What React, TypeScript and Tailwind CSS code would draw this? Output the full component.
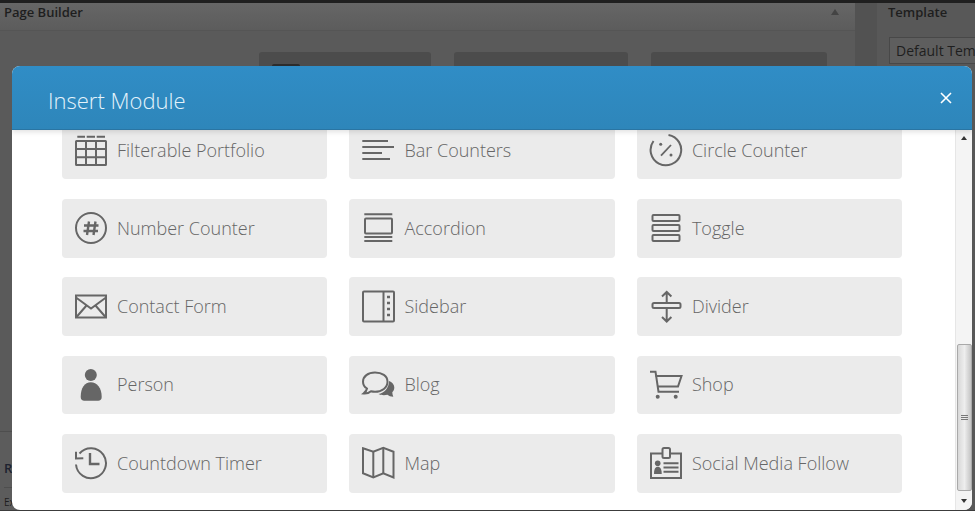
import type { ReactNode } from 'react';

const ic = { fill: 'none', stroke: '#666', strokeWidth: 2 };

function Icon({ children }: { children: ReactNode }) {
  return (
    <svg width="34" height="34" viewBox="0 0 34 34" className="shrink-0">
      {children}
    </svg>
  );
}

const icons: Record<string, ReactNode> = {
  portfolio: (
    <g {...ic}>
      <path d="M3.300 3.700H11M12.700 3.700H21M22.700 3.700H31" />
      <rect x="2" y="8" width="30" height="24" rx="0.500" />
      <path d="M2 16h30M2 24.300h30M12 8v24M22 8v24" />
    </g>
  ),
  bars: (
    <g {...ic}>
      <path d="M1.300 8H27M1.300 14H33M1.300 20H21M1.300 26H29" />
    </g>
  ),
  circle: (
    <g {...ic}>
      <path d="M19.500 1.900A15.300 15.300 0 1 1 4.500 8" />
      <path strokeWidth="1.800" d="M12 22.700 22 12" />
      <circle cx="11.700" cy="11.300" r="1.500" fill="#666" stroke="none" />
      <circle cx="22" cy="22" r="1.500" fill="#666" stroke="none" />
    </g>
  ),
  number: (
    <g {...ic}>
      <circle cx="17" cy="17" r="15" />
      <path strokeWidth="2.400" d="M15 10.500 13 24M21.500 10.500 19.500 24M10 14.500h14.500M9.500 20h14.500" />
    </g>
  ),
  accordion: (
    <g {...ic}>
      <path d="M3.300 3.300h28M3.300 26h28M3.300 30h28" />
      <rect x="4" y="7.500" width="27" height="15" rx="1" />
    </g>
  ),
  toggle: (
    <g {...ic}>
      <rect x="3.500" y="4" width="27" height="6" rx="1" />
      <rect x="3.500" y="14" width="27" height="6" rx="1" />
      <rect x="3.500" y="24" width="27" height="6" rx="1" />
    </g>
  ),
  contact: (
    <g {...ic}>
      <rect x="2" y="5.500" width="30" height="22" />
      <path d="m2 7.500 15 11 15-11M2.500 27l10-11.500M31.500 27l-10-11.500" />
    </g>
  ),
  sidebar: (
    <g {...ic}>
      <rect x="2" y="1.500" width="31" height="30" rx="1" />
      <path d="M22.500 1.500v30" />
      <path strokeWidth="2.500" d="M26 7h3M26 13h3M26 19h3M26 25h3" />
    </g>
  ),
  divider: (
    <g {...ic}>
      <rect x="3.500" y="13" width="28" height="5" rx="1.500" />
      <path d="M17.700 13V2M13 6.500 17.700 2l4.700 4.500M17.700 18v13.500M13 27l4.700 4.500 4.700-4.500" />
    </g>
  ),
  person: (
    <g fill="#666">
      <circle cx="16.800" cy="7" r="6" />
      <path d="M6.700 29c0-9 4-14.700 10.100-14.700S27.700 20 27.700 29c0 2.500-1.500 3.700-3.500 3.700H10.200c-2 0-3.500-1.200-3.500-3.700Z" />
    </g>
  ),
  blog: (
    <g>
      <path
        {...ic}
        d="M14 4.500C7 4.500 2 8.500 2 13.700c0 3 1.500 5.300 4 6.800-.3 2-1.500 3.500-3.500 5 3 .3 5.500-.5 7.500-2.200 1.500.4 2.800.5 4 .5 7 0 12.500-4.300 12.500-10.100S21 4.500 14 4.500Z"
      />
      <path
        fill="#666"
        d="M28 13c3 1 5.300 3.500 5.300 6.500 0 2-.8 3.500-2 4.800 0 1.500.4 3 1 4.500-2.500 0-4.500-.8-5.800-2-3 .6-6.500.6-9-.8 6-.7 10.500-6.500 10.500-13Z"
      />
    </g>
  ),
  shop: (
    <g {...ic}>
      <path d="M1 3.700h5.500l3 20h20.500" />
      <path d="M6.500 8h26l-3.500 10.500H8" />
      <circle cx="8.700" cy="28.700" r="2" fill="#666" stroke="none" />
      <circle cx="26.700" cy="28.700" r="2" fill="#666" stroke="none" />
    </g>
  ),
  timer: (
    <g {...ic}>
      <path d="M5.500 7.500A15 15 0 1 1 2 18.500" />
      <path d="M2 5.700 2 12.500l7.300-.3" />
      <path strokeWidth="2.400" d="M16 7v11h9.500" />
    </g>
  ),
  map: (
    <g {...ic}>
      <path d="M2 2.300 12.300 5.700 22.300 1.800 32.500 5.700V31.500L22.300 27.300 12.300 31.500 2 27.300Z" />
      <path d="M12.300 5.700v25.800M22.300 1.800v25.500" />
    </g>
  ),
  follow: (
    <g>
      <path {...ic} d="M13 7.500H2v24.500h30V7.500H21" />
      <rect {...ic} x="13.500" y="2" width="7.500" height="10" rx="1.500" />
      <circle cx="8.700" cy="17.300" r="2.800" fill="#666" />
      <path fill="#666" d="M5 28c0-5 1.300-7.300 3.800-7.300s3.900 2.300 3.900 7.300Z" />
      <path {...ic} d="M14.500 17.300h15M14.500 21.500h15M14.500 25.700h15" />
    </g>
  ),
};

const modules = [
  ['Filterable Portfolio', 'portfolio'],
  ['Bar Counters', 'bars'],
  ['Circle Counter', 'circle'],
  ['Number Counter', 'number'],
  ['Accordion', 'accordion'],
  ['Toggle', 'toggle'],
  ['Contact Form', 'contact'],
  ['Sidebar', 'sidebar'],
  ['Divider', 'divider'],
  ['Person', 'person'],
  ['Blog', 'blog'],
  ['Shop', 'shop'],
  ['Countdown Timer', 'timer'],
  ['Map', 'map'],
  ['Social Media Follow', 'follow'],
];

export default function App() {
  return (
    <div className="relative flex h-[511px] w-[975px] flex-col overflow-hidden bg-[#5a5a5a] font-['Open_Sans',sans-serif]">
      {/* dimmed admin page behind the modal */}
      <div className="h-[3px] shrink-0 bg-[#1f1f1f]" />
      <div className="flex min-h-0 flex-1">
        <div className="flex w-[855px] shrink-0 flex-col bg-[#5a5a5a]">
          <div className="flex h-[28px] shrink-0 items-start justify-between border-b border-[#555] bg-gradient-to-b from-[#666] to-[#5c5c5c] pr-[16px] pl-[4px]">
            <span className="text-[13px] leading-[18px] font-semibold text-[#1e1e1e]">Page Builder</span>
            <div className="mt-[6px] h-0 w-0 border-x-[4px] border-b-[6px] border-x-transparent border-b-[#444]" />
          </div>
          <div className="flex gap-[23px] pt-[21px] pl-[259px]">
            <div className="h-[20px] w-[172px] rounded-[3px] bg-[#4c4c4c] pt-[12px] pl-[13px]">
              <div className="h-[8px] w-[28px] rounded-t-[2px] bg-[#2c2c2c]" />
            </div>
            <div className="h-[20px] w-[174px] rounded-[3px] bg-[#4c4c4c]" />
            <div className="h-[20px] w-[176px] rounded-[3px] bg-[#4c4c4c]" />
          </div>
          <div className="mt-[359px] flex-1 border-t border-[#4e4e4e] bg-[#5c5c5c] pl-[4px]">
            <div className="pt-[27px] text-[13px] leading-[18px] font-semibold whitespace-nowrap text-[#1e2330]">Revisions</div>
            <div className="mt-[10px] border-t border-[#4e4e4e] pt-[9px] text-[10px] leading-[10px] whitespace-nowrap text-[#1e1e1e]">
              Excerpt
            </div>
          </div>
        </div>
        <div className="w-[22px] shrink-0 bg-[#525252]" />
        <div className="flex-1 bg-[#585858] pl-[11px]">
          <div className="text-[13px] leading-[18px] font-semibold text-[#1e1e1e]">Template</div>
          <div className="mt-[16px] ml-[1px] h-[27px] w-[100px] overflow-hidden border border-[#484848] bg-[#5e5e5e] pl-[6px] text-[14px] leading-[25px] whitespace-nowrap text-[#1e1e1e]">
            Default Template
          </div>
        </div>
      </div>
      <div className="h-px shrink-0 bg-[#3c3c3c]" />

      {/* modal */}
      <div className="absolute top-[66px] left-[12px] flex h-[444px] w-[960px] flex-col overflow-hidden rounded-[8px] bg-white">
        <div className="relative z-10 flex h-[64px] shrink-0 items-center justify-between border-b border-[#2a75a3] bg-gradient-to-b from-[#308dc6] to-[#2e86ba] pr-[20px] pl-[36px] shadow-[0_2px_5px_rgba(0,0,0,0.12)]">
          <span className="pt-[6px] text-[22px] font-light text-[#e4f3fb]">Insert Module</span>
          <svg width="12" height="12" viewBox="0 0 12 12">
            <path d="M1 1l10 10M11 1 1 11" stroke="#fff" strokeWidth="1.600" fill="none" />
          </svg>
        </div>
        <div className="flex min-h-0 flex-1">
          <div className="flex-1 overflow-hidden pr-[53px] pl-[50px]">
            <div className="-mt-[9.200px] grid grid-cols-3 gap-x-[22.400px] gap-y-[19.940px]">
              {modules.map(([label, icon]) => (
                <div key={label} className="flex h-[58.400px] items-center gap-[9px] rounded-[4px] bg-[#ebebeb] pl-[12px]">
                  <Icon>{icons[icon]}</Icon>
                  <span className="text-[18px] font-light whitespace-nowrap text-[#666]">{label}</span>
                </div>
              ))}
            </div>
          </div>
          {/* scrollbar */}
          <div className="flex w-[17px] shrink-0 flex-col items-center border-l border-[#e6e6e6] bg-[#f4f4f4]">
            <div className="flex h-[15px] items-center justify-center">
              <div className="h-0 w-0 border-x-[3.500px] border-b-[4px] border-x-transparent border-b-[#333]" />
            </div>
            <div className="flex-1" />
            <div className="flex h-[147px] w-[15px] flex-col items-center justify-center gap-[1px] rounded-[2px] border border-[#a9a9a9] bg-gradient-to-r from-[#d8d8d8] via-[#eeeeee] to-[#c4c4c4]">
              <div className="h-px w-[7px] bg-[#777]" />
              <div className="h-px w-[7px] bg-[#777]" />
              <div className="h-px w-[7px] bg-[#777]" />
            </div>
            <div className="flex h-[19px] items-center justify-center">
              <div className="h-0 w-0 border-x-[3.500px] border-t-[4px] border-x-transparent border-t-[#333]" />
            </div>
          </div>
        </div>
      </div>
    </div>
  );
}
